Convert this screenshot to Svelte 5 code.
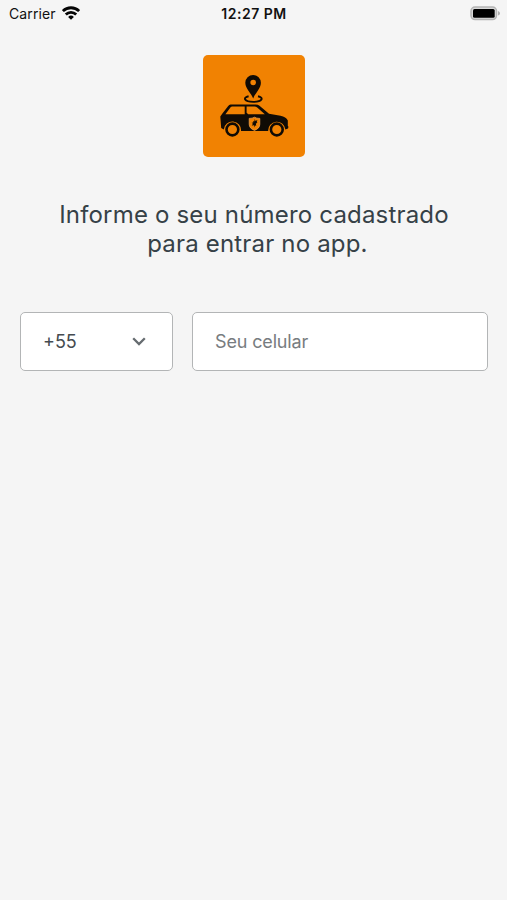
<script lang="ts">
	let country = $state('+55');
	let phone = $state('');
</script>

<div class="screen">
	<header class="status">
		<div class="carrier">
			<span>Carrier</span>
			<svg width="18" height="14" viewBox="0 0 18 14" aria-hidden="true">
				<g fill="none" stroke="#050505" stroke-width="2.8">
					<path d="M0.9 5.1a11.5 11.5 0 0 1 16.2 0" />
					<path d="M3.8 8.5a7.4 7.4 0 0 1 10.4 0" />
				</g>
				<path d="M9 13.8 6.1 10.9a4.1 4.1 0 0 1 5.8 0z" fill="#050505" />
			</svg>
		</div>
		<span class="time">12:27 PM</span>
		<svg class="battery" width="31" height="15" viewBox="0 0 31 15" aria-hidden="true">
			<rect x="1" y="1" width="25.5" height="12.6" rx="4" fill="#d9d9d9" stroke="#b4b4b4" stroke-width="1.5" />
			<rect x="3" y="3" width="21.7" height="8.8" rx="1.5" fill="#000" />
			<path d="M28 5v4.6q2-.7 2-2.3T28 5z" fill="#b0b0b0" />
		</svg>
	</header>

	<main>
		<svg class="logo" viewBox="0 0 102 102" role="img" aria-label="Logo">
			<rect width="102" height="102" rx="5" fill="#f18202" />
			<!-- map pin -->
			<path
				fill="#100b05"
				fill-rule="evenodd"
				d="M50.2 43.4C48.6 38.6 42.3 33.6 42.3 27.7a7.8 7.8 0 0 1 15.6 0c0 5.9-6.1 10.9-7.7 15.7zM50.2 24.7a2.8 2.8 0 1 0 0 5.6 2.8 2.8 0 0 0 0-5.6z"
			/>
			<path
				d="M45.6 41.2c-6 1.4-4.6 5.7 4.7 5.7s10.7-4.3 4.7-5.7"
				fill="none"
				stroke="#100b05"
				stroke-width="1.9"
			/>
			<!-- car -->
			<path
				fill="#100b05"
				fill-rule="evenodd"
				d="M27.5 49.6H52.8Q55 49.6 56.5 50.8L66 58.8 77.5 60.8Q83 62 84.8 65.4V70.8Q85.8 71.4 85 73.6L82.4 74.6A8.6 8.6 0 0 0 65.2 75.9H38A8.6 8.6 0 0 0 20.8 74.4L18.2 73 17.3 61.6 19.4 58.6 25 51.2Q26.2 49.6 27.5 49.6zM29.2 51.5Q28.2 51.5 27.6 52.3L22.4 59.3H41.7V51.5zM43.6 51.5V57.7L45.2 59.3H61.8L54.2 52.6Q53.1 51.5 51.6 51.5z"
			/>
			<circle cx="29.4" cy="74.5" r="5.9" fill="none" stroke="#100b05" stroke-width="2.6" />
			<circle cx="73.8" cy="74.5" r="5.9" fill="none" stroke="#100b05" stroke-width="2.6" />
			<!-- door shield -->
			<path
				d="M46.2 63.4q3.2.1 5.3-1.2 2.1 1.3 5.3 1.2v5.8q0 4.2-5.3 6.2-5.3-2-5.3-6.2z"
				fill="#f18202"
				stroke="#f6a957"
				stroke-width=".7"
			/>
			<path
				d="M51.8 64l.7 1.9 1.9-.8-.7 2.1.9.6-1.7.7.3 2.4-1.3-.7-.7 2.4-.5-2.7-1.9.8 1.1-2-1.3-.9 1.7-.4-.1-1.4 1.1.4z"
				fill="#100b05"
			/>
		</svg>

		<h1>Informe o seu número cadastrado<br />&nbsp;para entrar no app.</h1>

		<form>
			<button type="button" class="field code" aria-label="Código do país">
				<span>{country}</span>
				<svg width="14" height="9" viewBox="0 0 14 9" aria-hidden="true">
					<path d="M1.2 1.3 7 7.1l5.8-5.8" fill="none" stroke="#666c70" stroke-width="2.3" />
				</svg>
			</button>
			<input class="field phone" type="tel" placeholder="Seu celular" bind:value={phone} />
		</form>
	</main>
</div>

<style>
	:global(body) {
		background: #f5f5f5;
	}
	.screen {
		min-height: 900px;
		box-sizing: border-box;
		background: #f5f5f5;
		font-family: Inter, 'Liberation Sans', sans-serif;
		color: #364147;
	}
	.status {
		display: grid;
		grid-template-columns: 1fr auto 1fr;
		align-items: center;
		height: 27px;
		padding: 0 6px 0 9px;
		color: #111;
		font-size: 14px;
	}
	.carrier {
		display: flex;
		align-items: center;
		gap: 6px;
		letter-spacing: 0.12px;
	}
	.carrier svg {
		margin-top: -2px;
	}
	.time {
		margin-right: 2px;
		font-weight: 600;
		letter-spacing: 0.5px;
	}
	.battery {
		justify-self: end;
	}
	main {
		padding: 28px 19px 0 20px;
	}
	.logo {
		display: block;
		width: 102px;
		height: 102px;
		margin: 0 auto;
	}
	h1 {
		margin: 43px 0 0;
		font-size: 24px;
		font-weight: 400;
		line-height: 29px;
		letter-spacing: 0.18px;
		text-align: center;
	}
	form {
		display: flex;
		gap: 19px;
		margin-top: 54px;
	}
	.field {
		box-sizing: border-box;
		height: 59px;
		border: 1px solid #b3b5b6;
		border-radius: 5px;
		background: #fff;
		font-family: inherit;
		font-size: 18px;
	}
	.code {
		display: flex;
		align-items: center;
		justify-content: space-between;
		width: 153px;
		padding: 0 26px 0 22px;
		color: #454b50;
	}
	.phone {
		flex: 1;
		min-width: 0;
		padding: 0 22px;
		color: #454b50;
		letter-spacing: -0.15px;
	}
	.phone::placeholder {
		color: #777c80;
		opacity: 1;
	}
	.phone:focus {
		outline: none;
	}
</style>
